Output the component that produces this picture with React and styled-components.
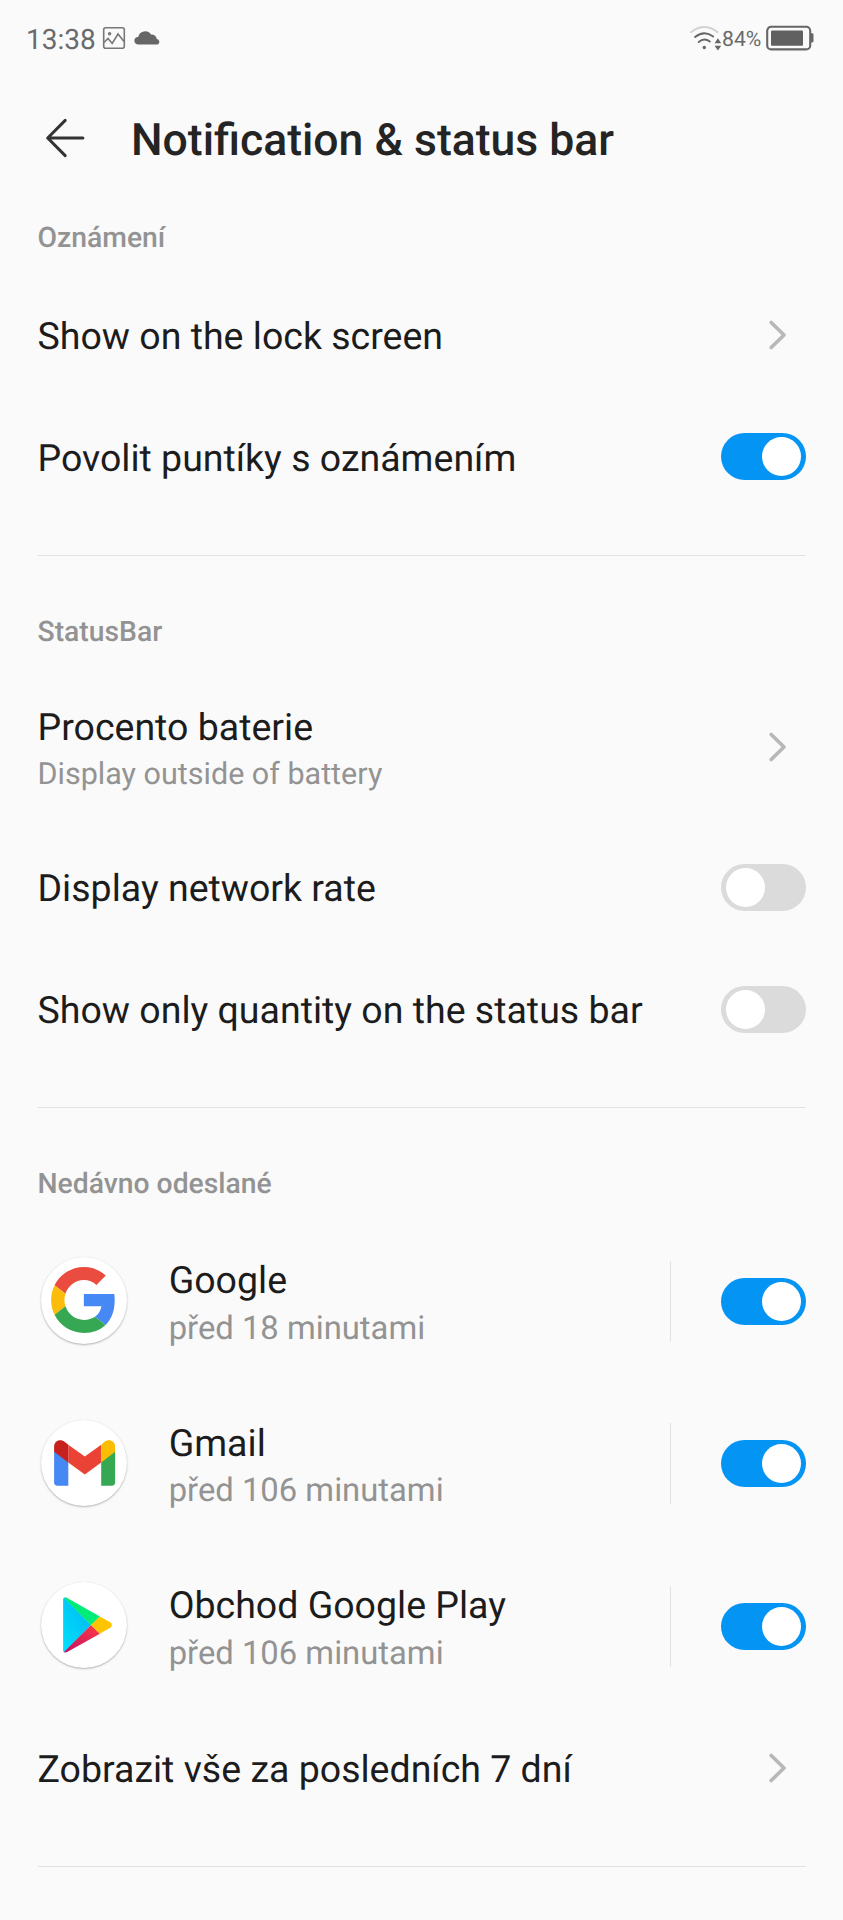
import React, { useState } from "react";
import styled, { createGlobalStyle } from "styled-components";

const recentApps = [
  { id: "google", name: "Google", time: "před 18 minutami" },
  { id: "gmail", name: "Gmail", time: "před 106 minutami" },
  { id: "play", name: "Obchod Google Play", time: "před 106 minutami" },
];

const AppLogo = ({ id }) => {
  return (
    <Logo>
      <svg width="88" height="88" viewBox="-44 -44 88 88">
        {id === "google" && (
          <g transform="translate(-32.9 -33) scale(1.365 1.375)">
            <path
              fill="#ea4d3f"
              d="M24 9.5c3.54 0 6.71 1.22 9.21 3.6l6.85-6.85C35.9 2.38 30.47 0 24 0 14.62 0 6.51 5.38 2.56 13.22l7.98 6.19C12.43 13.72 17.74 9.5 24 9.5z"
            />
            <path
              fill="#4688f4"
              d="M46.6 24.2c0-1.57-.15-3.09-.38-4.55H24v8.9h12.94c-.58 2.96-2.26 5.95-4.78 7.65l7.73 6c4.51-4.18 6.71-10.71 6.71-18z"
            />
            <path
              fill="#fbbd0a"
              d="M10.53 28.59c-.48-1.45-.76-2.99-.76-4.59s.27-3.14.76-4.59l-7.98-6.19C.92 16.46 0 20.12 0 24c0 3.88.92 7.54 2.56 10.78l7.97-6.19z"
            />
            <path
              fill="#36a853"
              d="M24 48c6.48 0 11.93-2.13 15.89-5.81l-7.73-6c-2.15 1.45-4.92 2.3-8.16 2.3-6.26 0-11.57-4.22-13.47-9.91l-7.98 6.19C6.51 42.62 14.62 48 24 48z"
            />
          </g>
        )}
        {id === "gmail" && (
          <g>
            <path fill="#4688f4" d="M-29.9 -12L-15.7 -1.5V22.7H-26.5Q-29.9 22.7 -29.9 19.3z" />
            <path fill="#36a853" d="M31.1 -12L17.2 -1.5V22.7H27.7Q31.1 22.7 31.1 19.3z" />
            <path fill="#ea4335" d="M-15.7 -18.2L0.8 -6.6L17.2 -18.2V-0.5L0.8 11.4L-15.7 -0.5z" />
            <path
              fill="#c5221f"
              d="M-29.9 -16.2C-29.9 -22.3 -23.6 -24.7 -18.8 -20.7L-15.7 -18.3V-0.5L-29.9 -11.2z"
            />
            <path
              fill="#fbbc04"
              d="M31.1 -16.2C31.1 -22.3 24.8 -24.7 20 -20.7L17.2 -18.3V-0.5L31.1 -11.2z"
            />
          </g>
        )}
        {id === "play" && (
          <g>
            <defs>
              <linearGradient id="playBlue" x1="1" y1="0" x2="0" y2="1">
                <stop offset="0" stopColor="#00b5f2" />
                <stop offset="1" stopColor="#00e1fc" />
              </linearGradient>
              <linearGradient id="playRed" x1="1" y1="0" x2="0" y2="1">
                <stop offset="0" stopColor="#ff3a44" />
                <stop offset="1" stopColor="#c31162" />
              </linearGradient>
            </defs>
            <path fill="url(#playBlue)" d="M-20.9 -25.5Q-20.9 -27 -19.5 -27.3L7 0L-19.5 27.3Q-20.9 27 -20.9 25.5z" />
            <path fill="#00ec78" d="M-20 -27.2Q-18.6 -28.1 -16.8 -27.1L15.9 -8.6L7 0.2z" />
            <path fill="url(#playRed)" d="M-20 27Q-18.6 28 -16.8 27.1L15.9 8.7L7 -0.1z" />
            <path fill="#ffc400" d="M15.9 -8.6L26.6 -2.4Q29.2 0 26.6 2.4L15.9 8.7L7 0z" />
          </g>
        )}
      </svg>
    </Logo>
  );
};

const Chevron = () => (
  <ChevronIcon viewBox="0 0 20 32">
    <path d="M3.2 3.5L16 16L3.2 28.5" />
  </ChevronIcon>
);

const Toggle = ({ label, initial }) => {
  const [on, setOn] = useState(initial);
  return (
    <Switch role="switch" aria-label={label} aria-checked={on} $on={on} onClick={() => setOn(!on)}>
      <Knob />
    </Switch>
  );
};

const App = () => {
  return (
    <>
      <GlobalStyle />
      <Screen>
        <StatusBar>
          <Clock>13:38</Clock>
          <PictureIcon width="24" height="24" viewBox="0 0 24 24">
            <rect x="1.7" y="1.7" width="20.6" height="20.6" rx="2" />
            <path d="M2 16.5L6 12.5L10.2 17.5L16 8L22 15.5" />
            <circle cx="7.6" cy="7.8" r="1" />
          </PictureIcon>
          <CloudIcon width="27" height="15" viewBox="0 0 27 15">
            <path d="M4 14.4A3.7 3.7 0 0 1 4.2 7A7 7 0 0 1 17 4.6A5.2 5.2 0 0 1 22.8 9A2.8 2.8 0 0 1 23.6 14.4z" />
          </CloudIcon>
          <Spacer />
          <svg width="32" height="26" viewBox="0 0 32 26">
            <g fill="none" strokeLinecap="round" strokeWidth="1.9">
              <path stroke="#d2d2d2" d="M1 7.2Q14.3 -3 27.6 7.2" />
              <path stroke="#666" d="M5 12Q14.3 4.6 23.2 11.5" />
              <path stroke="#666" d="M8.7 17Q14.3 12.4 19.8 16.6" />
            </g>
            <circle cx="14.3" cy="22.5" r="1.7" fill="#666" />
            <path fill="#666" d="M24.6 18.2L27.9 13.2L31.2 18.2zM24.6 20.8H31.2L27.9 25.6z" />
          </svg>
          <Percent>84%</Percent>
          <svg width="48" height="26" viewBox="0 0 48 26">
            <rect x="1.2" y="1.8" width="43" height="22.6" rx="4" fill="none" stroke="#666" strokeWidth="2.1" />
            <rect x="5" y="5.4" width="32" height="15.4" rx="1" fill="#606060" />
            <path d="M45 8.2h1.2q1.3 0 1.3 1.3v6.6q0 1.3-1.3 1.3H45z" fill="#666" />
          </svg>
        </StatusBar>

        <Header>
          <BackIcon viewBox="0 0 42 42">
            <path d="M38.9 21H3.7M21.2 3.4L3.7 21L21.2 38.6" />
          </BackIcon>
          <Title>Notification &amp; status bar</Title>
        </Header>

        <Section>
          <SectionTitle>Oznámení</SectionTitle>
          <Row>
            <Label>Show on the lock screen</Label>
            <Chevron />
          </Row>
          <Row>
            <Label>Povolit puntíky s oznámením</Label>
            <Toggle label="Povolit puntíky s oznámením" initial={true} />
          </Row>
        </Section>

        <Section>
          <SectionTitle>StatusBar</SectionTitle>
          <Row $height="159px">
            <TextBlock>
              <Label>Procento baterie</Label>
              <Summary>Display outside of battery</Summary>
            </TextBlock>
            <Chevron />
          </Row>
          <Row>
            <Label>Display network rate</Label>
            <Toggle label="Display network rate" initial={false} />
          </Row>
          <Row>
            <Label>Show only quantity on the status bar</Label>
            <Toggle label="Show only quantity on the status bar" initial={false} />
          </Row>
        </Section>

        <Section>
          <SectionTitle>Nedávno odeslané</SectionTitle>
          {recentApps.map((app) => (
            <Row key={app.id} $height="162.4px">
              <AppLogo id={app.id} />
              <TextBlock>
                <Label>{app.name}</Label>
                <Summary $large>{app.time}</Summary>
              </TextBlock>
              <Separator />
              <Toggle label={app.name} initial={true} />
            </Row>
          ))}
          <Row>
            <Label>Zobrazit vše za posledních 7 dní</Label>
            <Chevron />
          </Row>
        </Section>
      </Screen>
    </>
  );
};

const GlobalStyle = createGlobalStyle`
  body {
    margin: 0;
    background: #fafafa;
  }
`;

const Screen = styled.div`
  box-sizing: border-box;
  width: 100%;
  min-height: 1920px;
  background: #fafafa;
  color: #1c1c1c;
  font-family: Roboto, "Noto Sans", sans-serif;
  text-rendering: geometricPrecision;
`;

const StatusBar = styled.div`
  box-sizing: border-box;
  display: flex;
  align-items: center;
  height: 76px;
  padding: 0 29px 0 26px;
  color: #6a6a6a;
`;

const Clock = styled.span`
  width: 76px;
  font-size: 28px;
  line-height: 34px;
  padding-top: 4px;
`;

const PictureIcon = styled.svg`
  margin-right: 7.5px;
  fill: none;
  stroke: #777;
  stroke-width: 1.6;
`;

const CloudIcon = styled.svg`
  margin-bottom: 1px;
  fill: #666;
`;

const Spacer = styled.div`
  flex: 1;
`;

const Percent = styled.span`
  width: 44px;
  font-size: 21.2px;
  line-height: 26px;
  padding-top: 3px;
`;

const Header = styled.header`
  display: flex;
  align-items: center;
  height: 124px;
  padding-left: 44px;
`;

const BackIcon = styled.svg`
  width: 42px;
  height: 42px;
  margin-right: 45px;
  fill: none;
  stroke: #333;
  stroke-width: 3;
  stroke-linecap: round;
  stroke-linejoin: round;
`;

const Title = styled.h1`
  margin: 4px 0 0;
  font-size: 44.5px;
  font-weight: 500;
  line-height: 52px;
  color: #242424;
`;

const Section = styled.section`
  margin: 0 37.5px;
  padding-bottom: 37px;
  border-bottom: 1px solid #e2e2e2;

  & + & {
    padding-top: 38px;
  }
`;

const SectionTitle = styled.h2`
  box-sizing: border-box;
  height: 74px;
  margin: 0;
  padding-top: 20px;
  font-size: 28.3px;
  font-weight: 500;
  line-height: 36px;
  color: #939393;
`;

const Row = styled.div`
  display: flex;
  align-items: center;
  height: ${(props) => props.$height || "121.8px"};
`;

const TextBlock = styled.div`
  flex: 1;
  padding-top: 5.5px;
`;

const Label = styled.div`
  flex: 1;
  padding-top: 4px;
  font-size: 37.5px;
  line-height: 44px;
  white-space: nowrap;
`;

const Summary = styled.div`
  margin-top: 1.5px;
  font-size: ${(props) => (props.$large ? "32.8px" : "30.5px")};
  line-height: ${(props) => (props.$large ? "48px" : "46px")};
  color: #939393;
  white-space: nowrap;
`;

const ChevronIcon = styled.svg`
  width: 20px;
  height: 32px;
  margin-right: 18px;
  fill: none;
  stroke: #b8b8b8;
  stroke-width: 3.7;
  stroke-linecap: round;
  stroke-linejoin: round;
`;

const Switch = styled.button`
  box-sizing: border-box;
  display: flex;
  align-items: center;
  justify-content: ${(props) => (props.$on ? "flex-end" : "flex-start")};
  width: 84.3px;
  height: 47px;
  padding: 0 4.6px;
  border: none;
  border-radius: 24px;
  background: ${(props) => (props.$on ? "#0394f4" : "#dbdbdb")};
`;

const Knob = styled.span`
  width: 39.2px;
  height: 39.2px;
  border-radius: 50%;
  background: #fff;
`;

const Logo = styled.div`
  display: flex;
  align-items: center;
  justify-content: center;
  width: 86.5px;
  height: 86.5px;
  margin: 0 41.6px 2px 3.1px;
  border-radius: 50%;
  background: #fff;
  box-shadow: 0 1px 2px rgba(0, 0, 0, 0.28), 0 0 1px rgba(0, 0, 0, 0.08);

  svg {
    flex: none;
  }
`;

const Separator = styled.div`
  width: 1px;
  height: 81px;
  margin-right: 50.5px;
  background: #e2e2e2;
`;

export default App;
